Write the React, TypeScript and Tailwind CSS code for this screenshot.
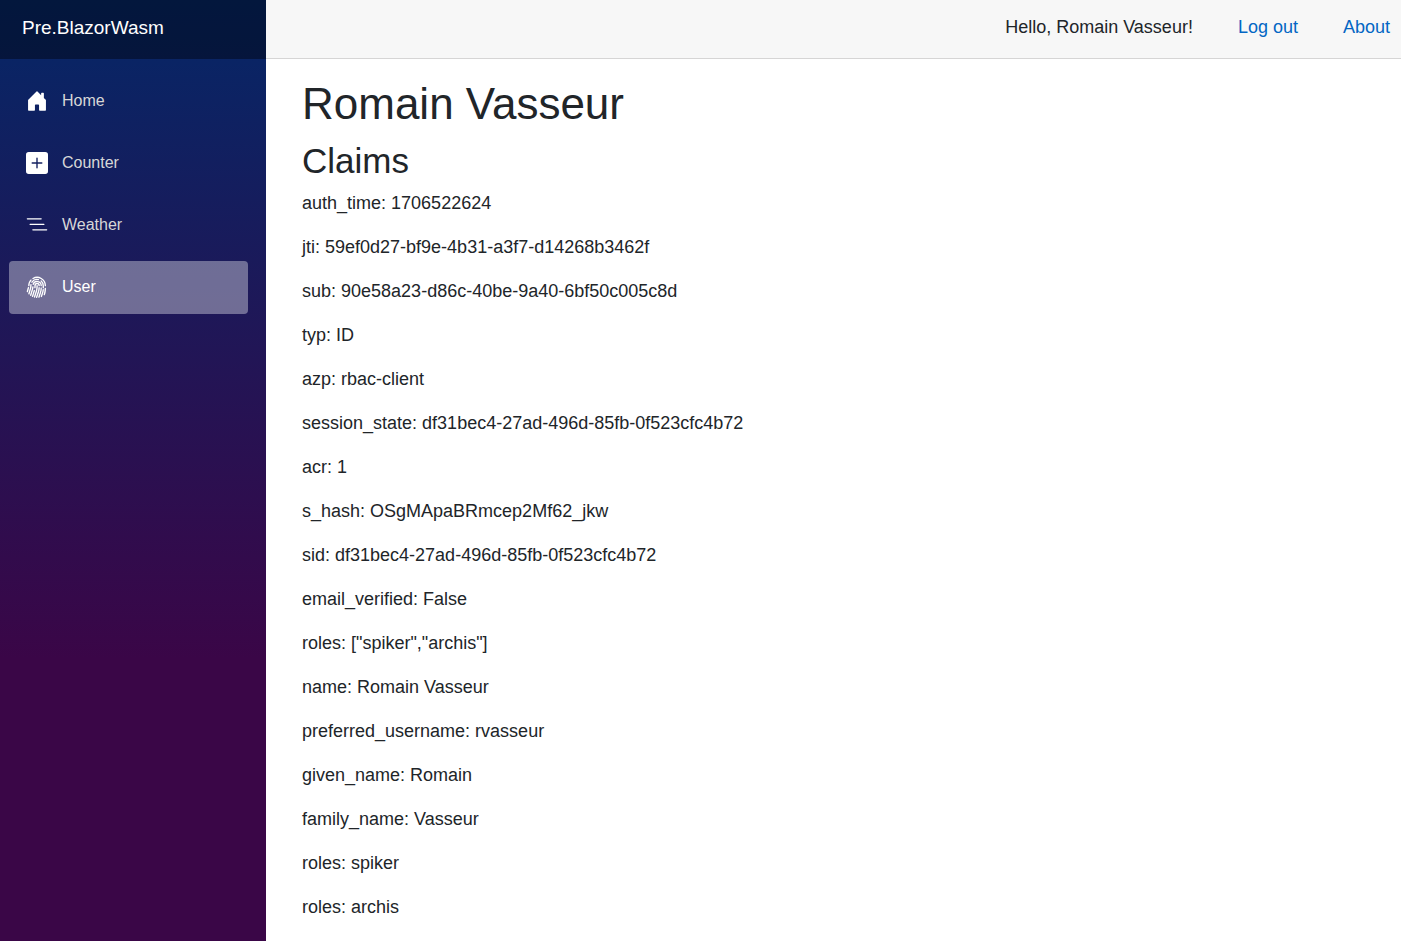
import { BsHouseDoorFill, BsPlusSquareFill, BsListNested, BsFingerprint } from "react-icons/bs";

const links = [
  { label: "Home", Icon: BsHouseDoorFill },
  { label: "Counter", Icon: BsPlusSquareFill },
  { label: "Weather", Icon: BsListNested },
  { label: "User", Icon: BsFingerprint, active: true },
];

const claims: [string, string][] = [
  ["auth_time", "1706522624"],
  ["jti", "59ef0d27-bf9e-4b31-a3f7-d14268b3462f"],
  ["sub", "90e58a23-d86c-40be-9a40-6bf50c005c8d"],
  ["typ", "ID"],
  ["azp", "rbac-client"],
  ["session_state", "df31bec4-27ad-496d-85fb-0f523cfc4b72"],
  ["acr", "1"],
  ["s_hash", "OSgMApaBRmcep2Mf62_jkw"],
  ["sid", "df31bec4-27ad-496d-85fb-0f523cfc4b72"],
  ["email_verified", "False"],
  ["roles", '["spiker","archis"]'],
  ["name", "Romain Vasseur"],
  ["preferred_username", "rvasseur"],
  ["given_name", "Romain"],
  ["family_name", "Vasseur"],
  ["roles", "spiker"],
  ["roles", "archis"],
];

export default function App() {
  return (
    <div className="flex min-h-screen bg-white font-['Liberation_Sans',Arial,sans-serif] text-[18px] text-[#212529]">
      <aside className="sticky top-0 h-screen w-[266px] shrink-0 bg-linear-to-b/srgb from-[#052767] to-[#3a0647] to-70%">
        <div className="flex h-[59px] items-center bg-black/40 px-[22px] pb-[3px]">
          <a href="#" className="text-[19px] text-white">Pre.BlazorWasm</a>
        </div>
        <nav className="flex flex-col gap-[9px] pt-4 pr-[18px] pl-[9px]">
          {links.map(({ label, Icon, active }) => (
            <a
              key={label}
              href="#"
              aria-current={active ? "page" : undefined}
              className={
                active
                  ? "flex h-[53px] items-center gap-[14px] rounded-[4px] bg-white/37 pb-[2px] pl-[17px] text-[16px] text-white"
                  : "flex h-[53px] items-center gap-[14px] rounded-[4px] pb-[2px] pl-[17px] text-[16px] text-[#d7d7d7]"
              }
            >
              <Icon className="size-[22px] text-white" aria-hidden="true" />
              {label}
            </a>
          ))}
        </nav>
      </aside>
      <div className="min-w-0 flex-1">
        <header className="flex h-[59px] items-center justify-end gap-[45px] border-b border-[#d6d5d5] bg-[#f7f7f7] pr-[11px] pb-1">
          <span>Hello, Romain Vasseur!</span>
          <button type="button" className="text-[#0366c4]">Log out</button>
          <a href="#" className="text-[#0366c4]">About</a>
        </header>
        <main className="pt-[18px] pr-7 pl-9">
          <h1 className="mb-[10px] text-[44px] leading-[53px]">Romain Vasseur</h1>
          <h2 className="mb-2 text-[35px] leading-[42px]">Claims</h2>
          <div className="flex flex-col gap-[17px] pb-4 leading-[27px]">
            {claims.map(([type, value], i) => (
              <p key={i}>
                {type}: {value}
              </p>
            ))}
          </div>
        </main>
      </div>
    </div>
  );
}
